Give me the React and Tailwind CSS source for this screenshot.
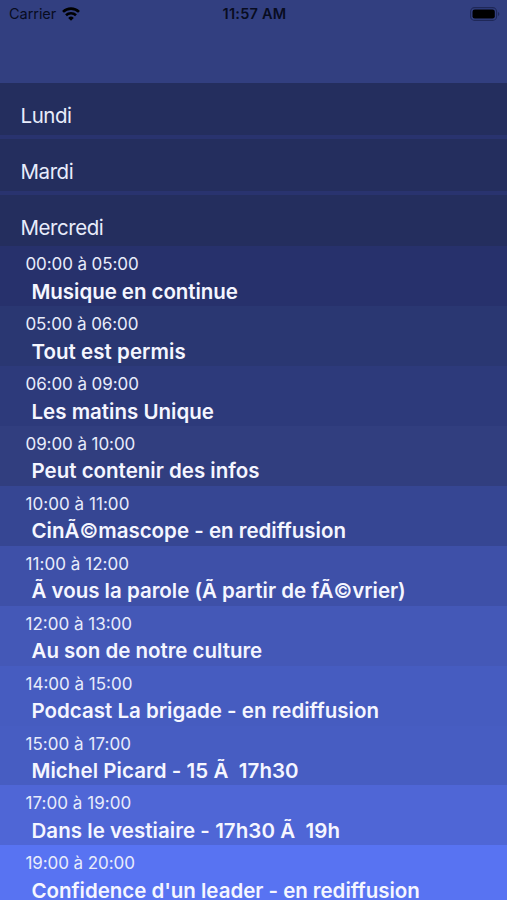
const days = ["Lundi", "Mardi", "Mercredi"];

const shows = [
  { time: "00:00 à 05:00", title: "Musique en continue", bg: "bg-[#27316c]", timeText: "tracking-[-0.1px]", titleText: "tracking-[-0.05px]" },
  { time: "05:00 à 06:00", title: "Tout est permis", bg: "bg-[#2a3772]", timeText: "tracking-[-0.1px]", titleText: "tracking-[0.05px]" },
  { time: "06:00 à 09:00", title: "Les matins Unique", bg: "bg-[#2d3a7b]", timeText: "tracking-[-0.08px]", titleText: "tracking-[0px]" },
  { time: "09:00 à 10:00", title: "Peut contenir des infos", bg: "bg-[#313e7f]", timeText: "tracking-[-0.08px]", titleText: "tracking-[0px]" },
  { time: "10:00 à 11:00", title: "CinÃ©mascope - en rediffusion", bg: "bg-[#364693]", timeText: "tracking-[0.05px]", titleText: "tracking-[0px]" },
  { time: "11:00 à 12:00", title: "Ã vous la parole (Ã partir de fÃ©vrier)", bg: "bg-[#3e50a8]", timeText: "tracking-[0.05px]", titleText: "tracking-[-0.01px]" },
  { time: "12:00 à 13:00", title: "Au son de notre culture", bg: "bg-[#4458b7]", timeText: "tracking-[0px]", titleText: "tracking-[-0.02px]" },
  { time: "14:00 à 15:00", title: "Podcast La brigade - en rediffusion", bg: "bg-[#465cc0]", timeText: "tracking-[0px]", titleText: "tracking-[0px]" },
  { time: "15:00 à 17:00", title: "Michel Picard - 15 Ã  17h30", bg: "bg-[#475dc2]", timeText: "tracking-[0.04px]", titleText: "tracking-[0.05px]" },
  { time: "17:00 à 19:00", title: "Dans le vestiaire - 17h30 Ã  19h", bg: "bg-[#4f66d6]", timeText: "tracking-[0.04px]", titleText: "tracking-[0.05px]" },
  { time: "19:00 à 20:00", title: "Confidence d'un leader - en rediffusion", bg: "bg-[#5873f2]", timeText: "tracking-[-0.08px]", titleText: "tracking-[-0.03px]" },
];

function StatusBar() {
  return (
    <div className="grid h-[27px] grid-cols-3 items-center pl-[9px] pr-[7px] text-[14.5px] text-[#080c20]">
      <div className="flex items-center gap-[6px]">
        <span className="tracking-[-0.05px]">Carrier</span>
        <svg className="h-[14px] w-[18px]" viewBox="0 0 18 14" fill="none" stroke="#000" strokeWidth="2.6">
          <path d="M1 4.9a11.4 11.4 0 0 1 16 0" />
          <path d="M4 8.300a7.200 7.200 0 0 1 10 0" />
          <path d="M9 13.700 6.200 10.900a4 4 0 0 1 5.600 0Z" fill="#000" stroke="none" />
        </svg>
      </div>
      <div className="text-center font-semibold tracking-[0.25px]">11:57 AM</div>
      <svg className="h-[14px] w-[30px] justify-self-end" viewBox="0 0 30 14">
        <rect x="0.6" y="0.6" width="26" height="12.8" rx="4" fill="none" stroke="#1f2858" strokeWidth="1.1" />
        <rect x="2.5" y="2.4" width="22.3" height="9.2" rx="2.3" fill="#000" />
        <path d="M28 5v4c1.8-.7 1.8-3.3 0-4Z" fill="#1f2858" />
      </svg>
    </div>
  );
}

export default function App() {
  return (
    <div className="flex h-[900px] w-[507px] flex-col overflow-hidden bg-[#29336f] font-['Inter','Liberation_Sans',sans-serif] text-[#e8ecfb]">
      <header className="h-[83px] shrink-0 bg-[#323f80]">
        <StatusBar />
      </header>
      <div className="flex shrink-0 flex-col gap-[4px]">
        {days.map((name) => (
          <div key={name} className="h-[51.8px] bg-[#242e5e] pl-[20.5px] pt-[18.2px]">
            <div className="text-[20.5px] leading-[30px] tracking-[-0.45px]">{name}</div>
          </div>
        ))}
      </div>
      <div className="shrink-0">
        {shows.map((s) => (
          <div key={s.time} className={`h-[59.9px] pt-[5px] ${s.bg}`}>
            <div className={`pl-[25.5px] text-[17px] leading-[26px] ${s.timeText}`}>{s.time}</div>
            <div className={`mt-[0.4px] whitespace-pre pl-[31.5px] text-[20.5px] font-semibold leading-[28px] text-[#f5f6ff] ${s.titleText}`}>
              {s.title.split(/(©)/).map((part, i) =>
                part === "©" ? <span key={i} className="font-medium">{part}</span> : part
              )}
            </div>
          </div>
        ))}
      </div>
    </div>
  );
}
